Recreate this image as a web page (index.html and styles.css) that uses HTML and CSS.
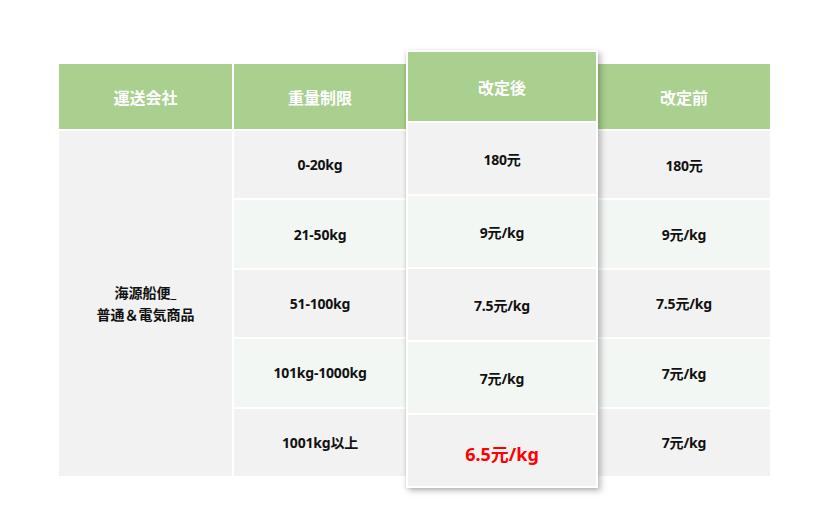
FILE: index.html
```html
<!DOCTYPE html>
<html lang="ja">
<head>
<meta charset="utf-8">
<link rel="stylesheet" href="styles.css">
</head>
<body>
<div class="table">
  <div class="col col-company">
    <div class="head">運送会社</div>
    <div class="merged">海源船便_<br>普通＆電気商品</div>
  </div>
  <div class="col col-weight">
    <div class="head">重量制限</div>
    <div class="cell odd">0-20kg</div>
    <div class="cell even">21-50kg</div>
    <div class="cell odd">51-100kg</div>
    <div class="cell even">101kg-1000kg</div>
    <div class="cell odd">1001kg以上</div>
  </div>
  <div class="card">
    <div class="card-head">改定後</div>
    <div class="card-cell odd">180元</div>
    <div class="card-cell even">9元/kg</div>
    <div class="card-cell odd">7.5元/kg</div>
    <div class="card-cell even">7元/kg</div>
    <div class="card-cell odd"><span class="hot">6.5元/kg</span></div>
  </div>
  <div class="col col-before">
    <div class="head">改定前</div>
    <div class="cell odd">180元</div>
    <div class="cell even">9元/kg</div>
    <div class="cell odd">7.5元/kg</div>
    <div class="cell even">7元/kg</div>
    <div class="cell odd">7元/kg</div>
  </div>
</div>
</body>
</html>
```

FILE: styles.css
```css
html, body {
  margin: 0;
  padding: 0;
  background: #ffffff;
}
body {
  width: 829px;
  height: 528px;
  font-family: "Noto Sans", "Noto Sans CJK JP", sans-serif;
  font-weight: 700;
  color: #111111;
}
.table {
  display: flex;
  align-items: flex-start;
  padding: 50px 0 0 59px;
}
.col {
  display: flex;
  flex-direction: column;
  gap: 2px;
  margin-top: 14px;
  width: 173px;
}
.col-weight {
  width: 172px;
  margin-left: 2px;
}
.col-before {
  width: 172px;
}
.head {
  height: 65px;
  background: #a9d08e;
  color: #ffffff;
  font-size: 16px;
  display: flex;
  align-items: center;
  justify-content: center;
}
.merged {
  height: 345px;
  background: #f2f2f2;
  font-size: 14px;
  line-height: 22px;
  display: flex;
  align-items: center;
  justify-content: center;
  text-align: center;
}
.cell {
  height: 67.4px;
  font-size: 14px;
  letter-spacing: -0.2px;
  display: flex;
  align-items: center;
  justify-content: center;
}
.odd { background: #f2f2f2; }
.even { background: #f3f7f4; }
.card {
  position: relative;
  z-index: 2;
  width: 188px;
  border: 2px solid #ffffff;
  background: #ffffff;
  display: flex;
  flex-direction: column;
  gap: 2px;
  box-shadow: 3px 3px 6px rgba(0, 0, 0, 0.25), -1px 1px 3px rgba(0, 0, 0, 0.1);
}
.card-head {
  height: 69px;
  background: #a9d08e;
  color: #ffffff;
  font-size: 16px;
  display: flex;
  align-items: center;
  justify-content: center;
}
.card-cell {
  height: 71px;
  font-size: 14px;
  letter-spacing: -0.2px;
  display: flex;
  align-items: center;
  justify-content: center;
}
.hot {
  color: #ff0000;
  font-size: 18px;
  letter-spacing: 0;
  margin-top: 4px;
}
```
